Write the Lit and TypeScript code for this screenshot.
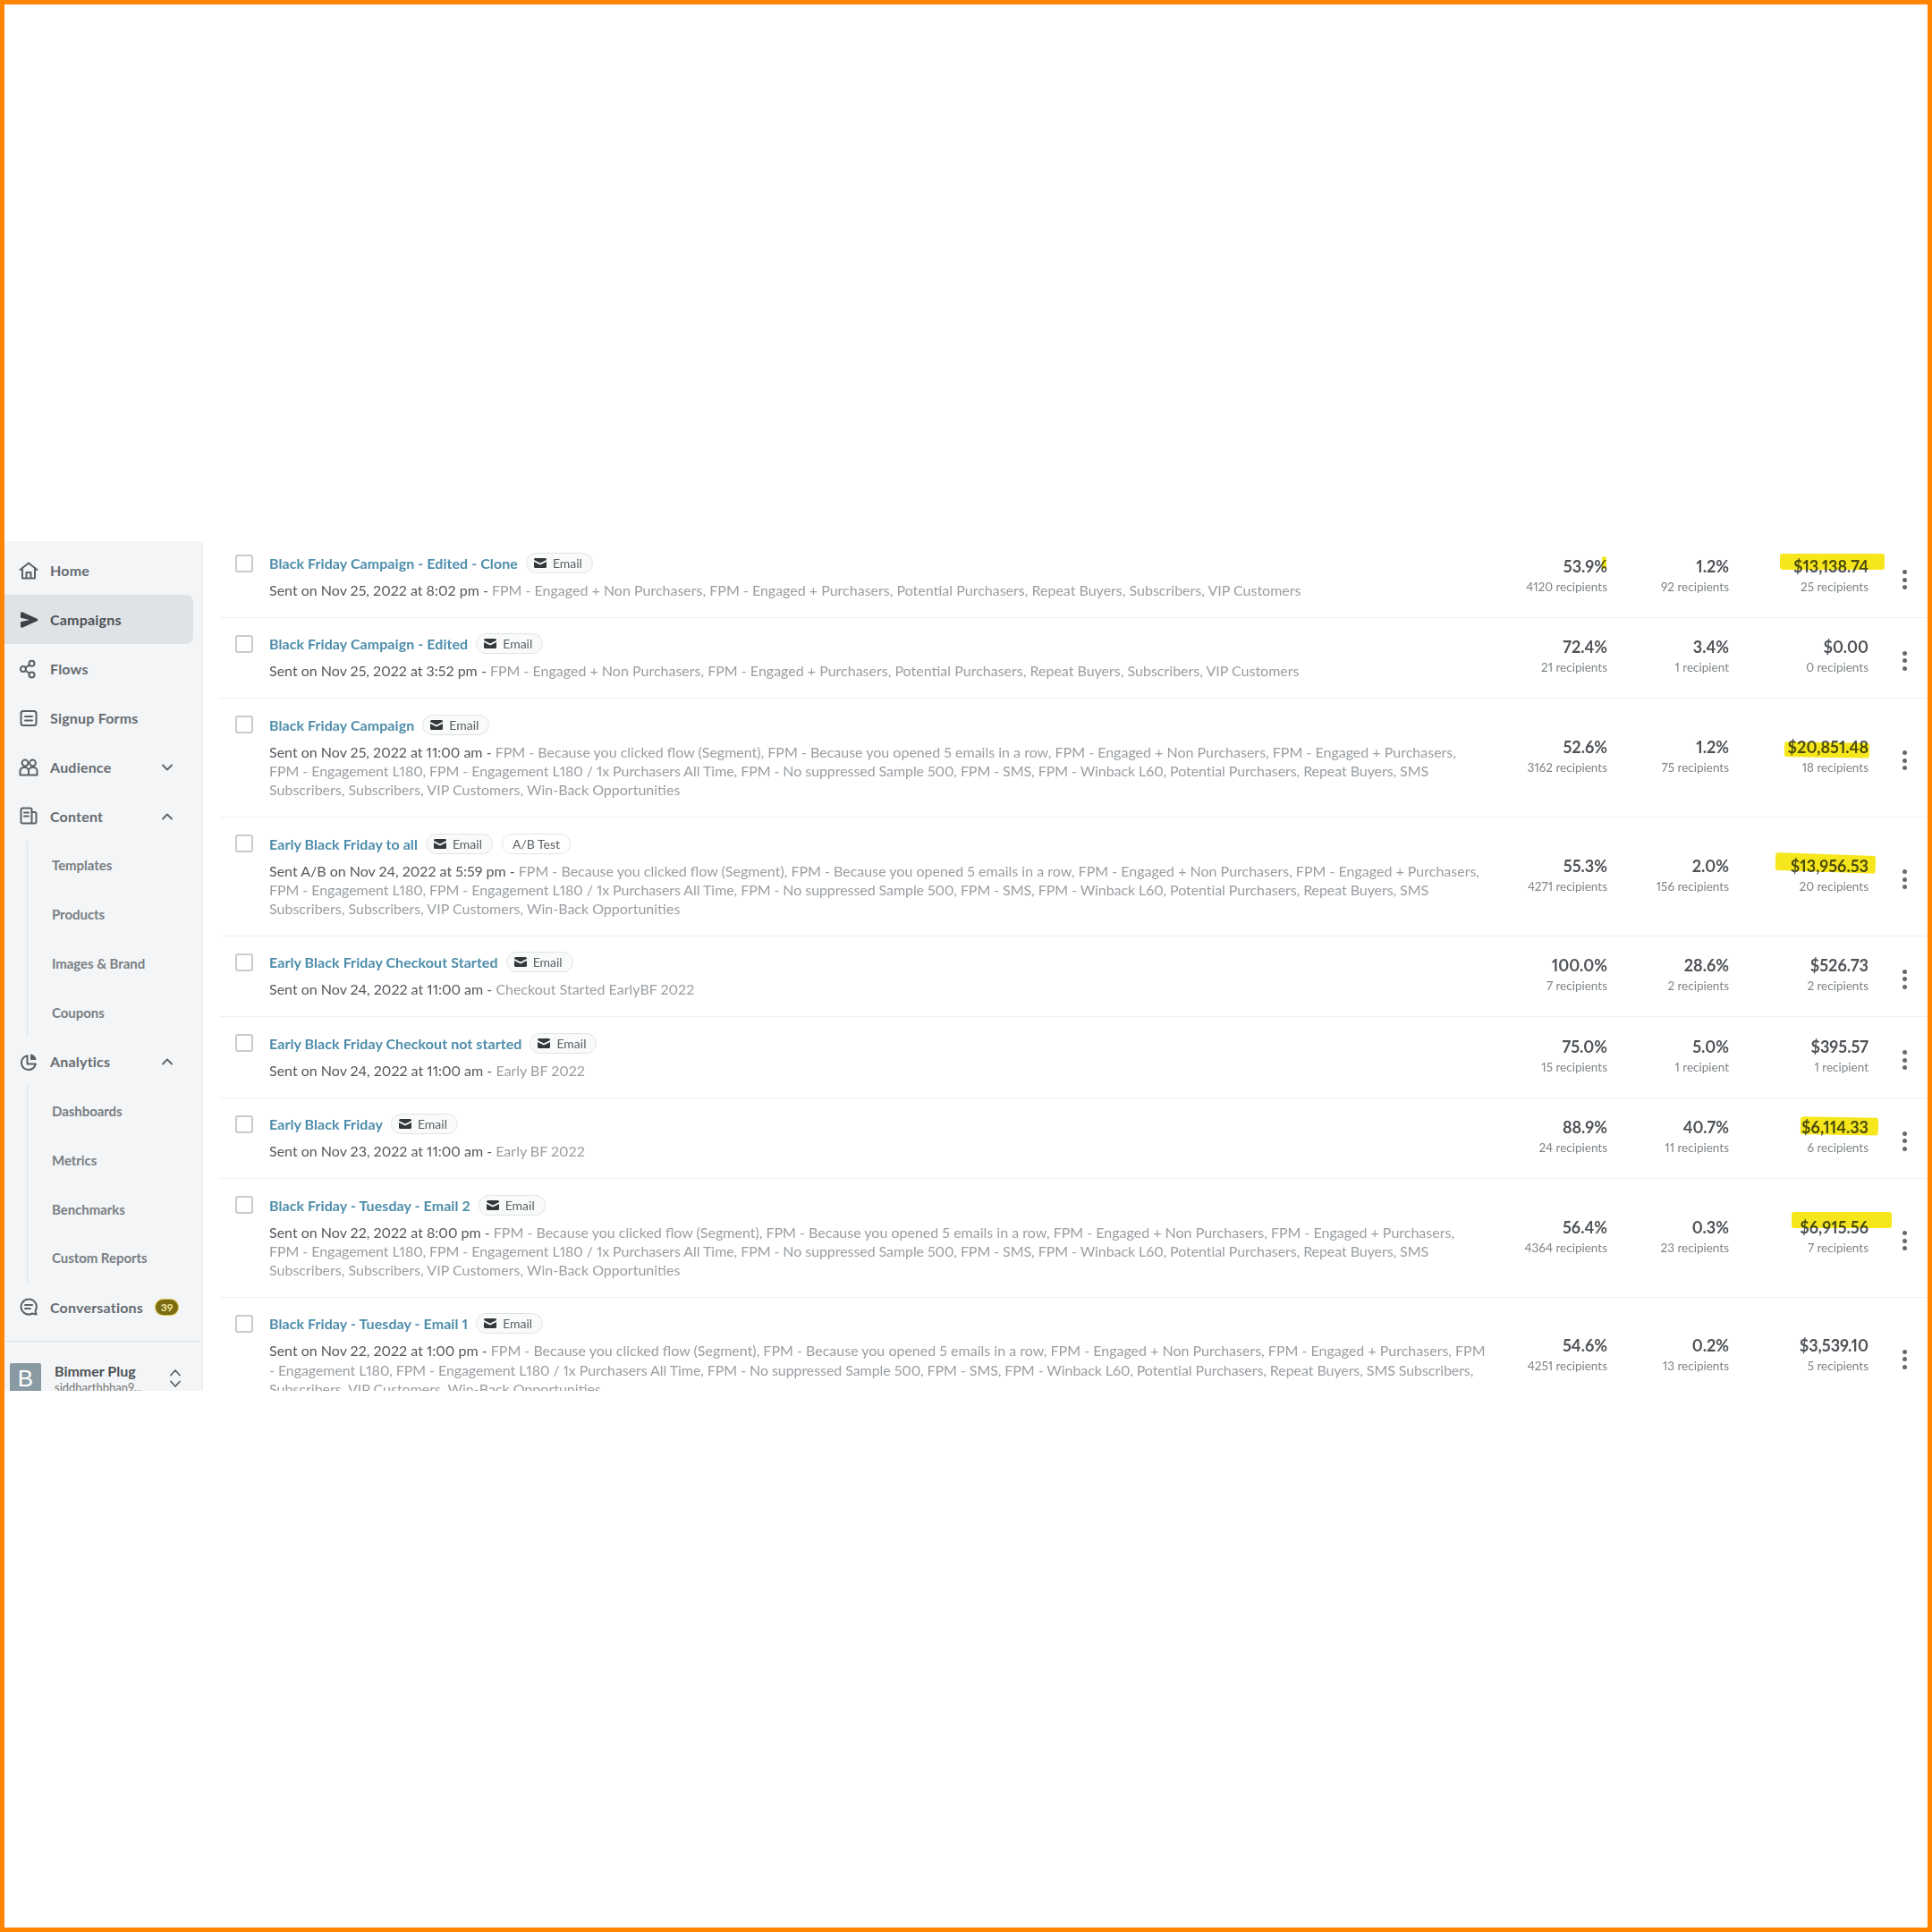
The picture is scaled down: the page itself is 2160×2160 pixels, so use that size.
import { LitElement, html, css, svg } from "lit";
import { customElement } from "lit/decorators.js";

const AUD = "FPM - Engaged + Non Purchasers, FPM - Engaged + Purchasers, Potential Purchasers, Repeat Buyers, Subscribers, VIP Customers";
const L1 = "FPM - Because you clicked flow (Segment), FPM - Because you opened 5 emails in a row, FPM - Engaged + Non Purchasers, FPM - Engaged + Purchasers,";
const L2 = "FPM - Engagement L180, FPM - Engagement L180 / 1x Purchasers All Time, FPM - No suppressed Sample 500, FPM - SMS, FPM - Winback L60, Potential Purchasers, Repeat Buyers, SMS";
const L3 = "Subscribers, Subscribers, VIP Customers, Win-Back Opportunities";

interface Hl { r: number; t: number; w: number; h: number; a?: number }
interface Row { title: string; ab?: boolean; sent: string; lines: string[]; m: [string, string][]; hl?: Hl; mark?: boolean }

const ROWS: Row[] = [
  { title: "Black Friday Campaign - Edited - Clone", sent: "Sent on Nov 25, 2022 at 8:02 pm", lines: [AUD], m: [["53.9%", "4120 recipients"], ["1.2%", "92 recipients"], ["$13,138.74", "25 recipients"]], hl: { r: -18, t: -2, w: 117, h: 18 }, mark: true },
  { title: "Black Friday Campaign - Edited", sent: "Sent on Nov 25, 2022 at 3:52 pm", lines: [AUD], m: [["72.4%", "21 recipients"], ["3.4%", "1 recipient"], ["$0.00", "0 recipients"]] },
  { title: "Black Friday Campaign", sent: "Sent on Nov 25, 2022 at 11:00 am", lines: [L1, L2, L3], m: [["52.6%", "3162 recipients"], ["1.2%", "75 recipients"], ["$20,851.48", "18 recipients"]], hl: { r: -1, t: 7, w: 95, h: 17, a: 1 } },
  { title: "Early Black Friday to all", ab: true, sent: "Sent A/B on Nov 24, 2022 at 5:59 pm", lines: [L1, L2, L3], m: [["55.3%", "4271 recipients"], ["2.0%", "156 recipients"], ["$13,956.53", "20 recipients"]], hl: { r: -8, t: -1, w: 112, h: 20, a: 2 } },
  { title: "Early Black Friday Checkout Started", sent: "Sent on Nov 24, 2022 at 11:00 am", lines: ["Checkout Started EarlyBF 2022"], m: [["100.0%", "7 recipients"], ["28.6%", "2 recipients"], ["$526.73", "2 recipients"]] },
  { title: "Early Black Friday Checkout not started", sent: "Sent on Nov 24, 2022 at 11:00 am", lines: ["Early BF 2022"], m: [["75.0%", "15 recipients"], ["5.0%", "1 recipient"], ["$395.57", "1 recipient"]] },
  { title: "Early Black Friday", sent: "Sent on Nov 23, 2022 at 11:00 am", lines: ["Early BF 2022"], m: [["88.9%", "24 recipients"], ["40.7%", "11 recipients"], ["$6,114.33", "6 recipients"]], hl: { r: -11, t: 1, w: 87, h: 20, a: 1 } },
  { title: "Black Friday - Tuesday - Email 2", sent: "Sent on Nov 22, 2022 at 8:00 pm", lines: [L1, L2, L3], m: [["56.4%", "4364 recipients"], ["0.3%", "23 recipients"], ["$6,915.56", "7 recipients"]], hl: { r: -26, t: -5, w: 112, h: 18 } },
  { title: "Black Friday - Tuesday - Email 1", sent: "Sent on Nov 22, 2022 at 1:00 pm", lines: [L1 + " FPM", "- Engagement L180, FPM - Engagement L180 / 1x Purchasers All Time, FPM - No suppressed Sample 500, FPM - SMS, FPM - Winback L60, Potential Purchasers, Repeat Buyers, SMS Subscribers,", "Subscribers, VIP Customers, Win-Back Opportunities"], m: [["54.6%", "4251 recipients"], ["0.2%", "13 recipients"], ["$3,539.10", "5 recipients"]] },
];

const ICONS: Record<string, unknown> = {
  home: svg`<path d="M1.5 10 11 2.5 20.5 10M4 8.5V19.5H18V8.5M8.5 19.5V13H13.5V19.5"/>`,
  campaigns: svg`<path class="fill" d="M2 4C2 2.5 3.2 1.9 4.5 2.5L20.5 9.8c1.1.5 1.1 1.9 0 2.4L4.5 19.5C3.2 20.1 2 19.5 2 18V13.2L12 11 2 8.8Z"/>`,
  flows: svg`<circle cx="14.5" cy="4.8" r="3"/><circle cx="5" cy="11" r="3"/><circle cx="14.5" cy="17.5" r="3"/><path d="M12 6.4 7.5 9.4M7.5 12.7 12 15.9"/>`,
  forms: svg`<rect x="2.5" y="3" width="17" height="16" rx="2.5"/><path d="M7 9H15M7 13.5H15"/>`,
  audience: svg`<circle cx="7" cy="6" r="3.4"/><circle cx="15.5" cy="6" r="3.4"/><path d="M1.5 19.5V15a4 4 0 0 1 4-4H7a4 4 0 0 1 4 4 4 4 0 0 1 4-4h1.5a4 4 0 0 1 4 4V19.5ZM11 15V19.5"/>`,
  content: svg`<rect x="2.5" y="2.5" width="12" height="17" rx="2"/><path d="M14.5 7H17.5A2 2 0 0 1 19.5 9V17.5A2 2 0 0 1 17.5 19.5H14.5M6 7.5H11M6 11.5H11"/>`,
  analytics: svg`<path d="M9.5 4.2A8 8 0 1 0 18.8 13.5H9.5Z"/><path class="fill" d="M13 2.5A7 7 0 0 1 19.5 9H13Z"/>`,
  conv: svg`<path d="M11 2.5A8.5 8.5 0 1 0 15 18.5L19.5 19.5 18.5 15.5A8.5 8.5 0 0 0 11 2.5Z"/><path d="M7 9H15M7 13H13"/>`,
};

const ic = (n: string) => html`<svg class="ic" viewBox="0 0 22 22">${ICONS[n]}</svg>`;
const chev = (up: boolean) => html`<svg class="chev" viewBox="0 0 14 14"><path d=${up ? "M2 9.5 7 4.5 12 9.5" : "M2 4.5 7 9.5 12 4.5"}/></svg>`;
const mail = html`<svg class="mail" viewBox="0 0 14 11"><path d="M1.5 0H12.5A1.5 1.5 0 0 1 14 1.5V2L7 5.5 0 2V1.5A1.5 1.5 0 0 1 1.5 0Z"/><path d="M0 4 7 7.5 14 4V9.5A1.5 1.5 0 0 1 12.5 11H1.5A1.5 1.5 0 0 1 0 9.5Z"/></svg>`;

@customElement("app-root")
export class AppRoot extends LitElement {
  static styles = css`
    :host { display: block; width: 2160px; height: 2160px; box-sizing: border-box; border: 5px solid #ff8500; background: #fff; font-family: Lato, "Open Sans", sans-serif; font-feature-settings: "pnum"; overflow: hidden; }
    .frame { display: flex; height: 950px; margin-top: 600px; overflow: hidden; filter: blur(0.55px); }
    .side { width: 222px; flex: none; box-sizing: border-box; background: #f3f5f7; border-right: 1px solid #e9ebee; padding-top: 5.5px; display: flex; flex-direction: column; overflow: hidden; }
    .item { height: 54.9px; flex: none; display: flex; align-items: center; padding-left: 16px; box-sizing: border-box; font-size: 16px; font-weight: 700; color: #666b70; letter-spacing: 0.2px; position: relative; width: 211px; }
    .item.on { background: #dfe3e6; border-radius: 0 8px 8px 0; color: #4c5257; }
    .item .ic { margin-right: 13px; }
    .ic { width: 22px; height: 22px; flex: none; fill: none; stroke: #5c6166; stroke-width: 2; stroke-linejoin: round; stroke-linecap: round; }
    .ic .fill { fill: #5c6166; stroke: none; }
    .on .ic .fill { fill: #3d4348; }
    .chev { position: absolute; left: 175px; top: 21px; width: 14px; height: 14px; fill: none; stroke: #5c6166; stroke-width: 1.8; stroke-linecap: round; stroke-linejoin: round; }
    .sub { margin-left: 25px; border-left: 1px solid #dfe2e5; flex: none; }
    .sub div { height: 54.9px; display: flex; align-items: center; padding-left: 27px; font-size: 15px; font-weight: 700; color: #797e83; letter-spacing: -0.05px; }
    .badge { margin-left: 14px; width: 25px; height: 17px; border-radius: 9px; background: #7b6b12; box-shadow: 0 0 0 1px #d9c44a; color: #f4e9a0; font-size: 12px; font-weight: 700; display: flex; align-items: center; justify-content: center; flex: none; letter-spacing: 0; }
    .acct { margin-top: 10px; border-top: 1px solid #e0e3e6; padding: 23px 0 0 6px; display: flex; position: relative; }
    .avatar { width: 35px; height: 36px; margin-top: 1px; background: #8a9aa3; color: #fff; font-size: 26px; display: flex; align-items: center; justify-content: center; border-radius: 2px; flex: none; font-family: "Liberation Sans", sans-serif; }
    .who { margin-left: 15px; line-height: 19px; }
    .who b { display: block; font-size: 16px; font-weight: 700; color: #4a4f54; }
    .who span { display: block; font-size: 13px; color: #777; }
    .updown { margin: 5px 0 0 31px; display: flex; flex-direction: column; }
    .updown svg { width: 14px; height: 13px; fill: none; stroke: #5c6166; stroke-width: 1.8; stroke-linecap: round; stroke-linejoin: round; }
    .main { flex: 1; min-width: 0; padding-left: 18px; overflow: hidden; }
    .row { display: grid; grid-template-columns: 38px 1fr 120px 136px 156px 66px; align-items: center; border-bottom: 1px solid #eef0f2; box-sizing: border-box; padding: 18.1px 0 19.6px 18px; }
    .row:first-child { padding-top: 13.5px; }
    .row:last-child { border-bottom: 0; }
    .cb { width: 20px; height: 20px; box-sizing: border-box; border: 2px solid #c7cbcf; border-radius: 3px; align-self: start; margin-top: 1px; }
    .body { min-width: 0; }
    .head { display: flex; align-items: center; height: 22px; margin-bottom: 8.5px; }
    .t { font-size: 16px; font-weight: 700; color: #4d8dab; white-space: nowrap; letter-spacing: 0.07px; }
    .pill { margin-left: 9px; height: 23px; box-sizing: border-box; border: 1px solid #e0e3e6; background: #f9fafa; border-radius: 12px; padding: 0 11px 0 8px; display: flex; align-items: center; font-size: 14px; color: #5a5f64; white-space: nowrap; flex: none; }
    .pill.ab { padding: 0 11px; margin-left: 10px; background: #fff; }
    .mail { width: 14px; height: 11px; fill: #33383c; margin-right: 7px; }
    .ln { font-size: 16px; line-height: 21.2px; color: #9a9ea2; white-space: nowrap; }
    .ln.second { letter-spacing: -0.075px; }
    .ln b { font-weight: 400; color: #54595e; }
    .met { text-align: right; white-space: nowrap; }
    .v { display: block; position: relative; font-size: 18px; line-height: 24px; font-weight: 700; color: #4f5357; }
    .v span { position: relative; display: inline-block; }
    .s { display: block; font-size: 13.5px; line-height: 23px; color: #7f8488; }
    .hl { position: absolute; background: #f6e71d; mix-blend-mode: multiply; border-radius: 3px; display: block; }
    .dots { padding: 8px 0 0 37.5px; display: flex; flex-direction: column; gap: 3.5px; }
    .dots i { width: 5px; height: 5px; border-radius: 50%; background: #666b70; display: block; }
  `;

  private renderRow(r: Row) {
    return html`<div class="row">
      <div class="cb"></div>
      <div class="body">
        <div class="head"><span class="t">${r.title}</span>
          <span class="pill">${mail}Email</span>
          ${r.ab ? html`<span class="pill ab">A/B Test</span>` : ""}
        </div>
        ${r.lines.map((l, i) => html`<div class="ln ${i === 1 ? "second" : ""}">${i === 0 ? html`<b>${r.sent} -</b> ` : ""}${l}</div>`)}
      </div>
      ${r.m.map((m, i) => html`<div class="met"><span class="v"><span>${m[0]}${i === 2 && r.hl
        ? html`<i class="hl" style="right:${r.hl.r}px;top:${r.hl.t}px;width:${r.hl.w}px;height:${r.hl.h}px;transform:rotate(${r.hl.a ?? 0}deg)"></i>`
        : ""}${i === 0 && r.mark ? html`<i class="hl" style="right:1px;top:1px;width:5px;height:14px"></i>` : ""}</span></span><span class="s">${m[1]}</span></div>`)}
      <div class="dots"><i></i><i></i><i></i></div>
    </div>`;
  }

  render() {
    return html`<div class="frame">
      <nav class="side">
        <div class="item">${ic("home")}Home</div>
        <div class="item on">${ic("campaigns")}Campaigns</div>
        <div class="item">${ic("flows")}Flows</div>
        <div class="item">${ic("forms")}Signup Forms</div>
        <div class="item">${ic("audience")}Audience${chev(false)}</div>
        <div class="item">${ic("content")}Content${chev(true)}</div>
        <div class="sub"><div>Templates</div><div>Products</div><div>Images &amp; Brand</div><div>Coupons</div></div>
        <div class="item">${ic("analytics")}Analytics${chev(true)}</div>
        <div class="sub"><div>Dashboards</div><div>Metrics</div><div>Benchmarks</div><div>Custom Reports</div></div>
        <div class="item">${ic("conv")}Conversations<span class="badge">39</span></div>
        <div class="acct"><div class="avatar">B</div><div class="who"><b>Bimmer Plug</b><span>siddharthbhan9...</span></div>
          <div class="updown"><svg viewBox="0 0 14 13"><path d="M2 9.5 7 4 12 9.5"/></svg><svg viewBox="0 0 14 13"><path d="M2 3.5 7 9 12 3.5"/></svg></div></div>
      </nav>
      <main class="main">${ROWS.map((r) => this.renderRow(r))}</main>
    </div>`;
  }
}
